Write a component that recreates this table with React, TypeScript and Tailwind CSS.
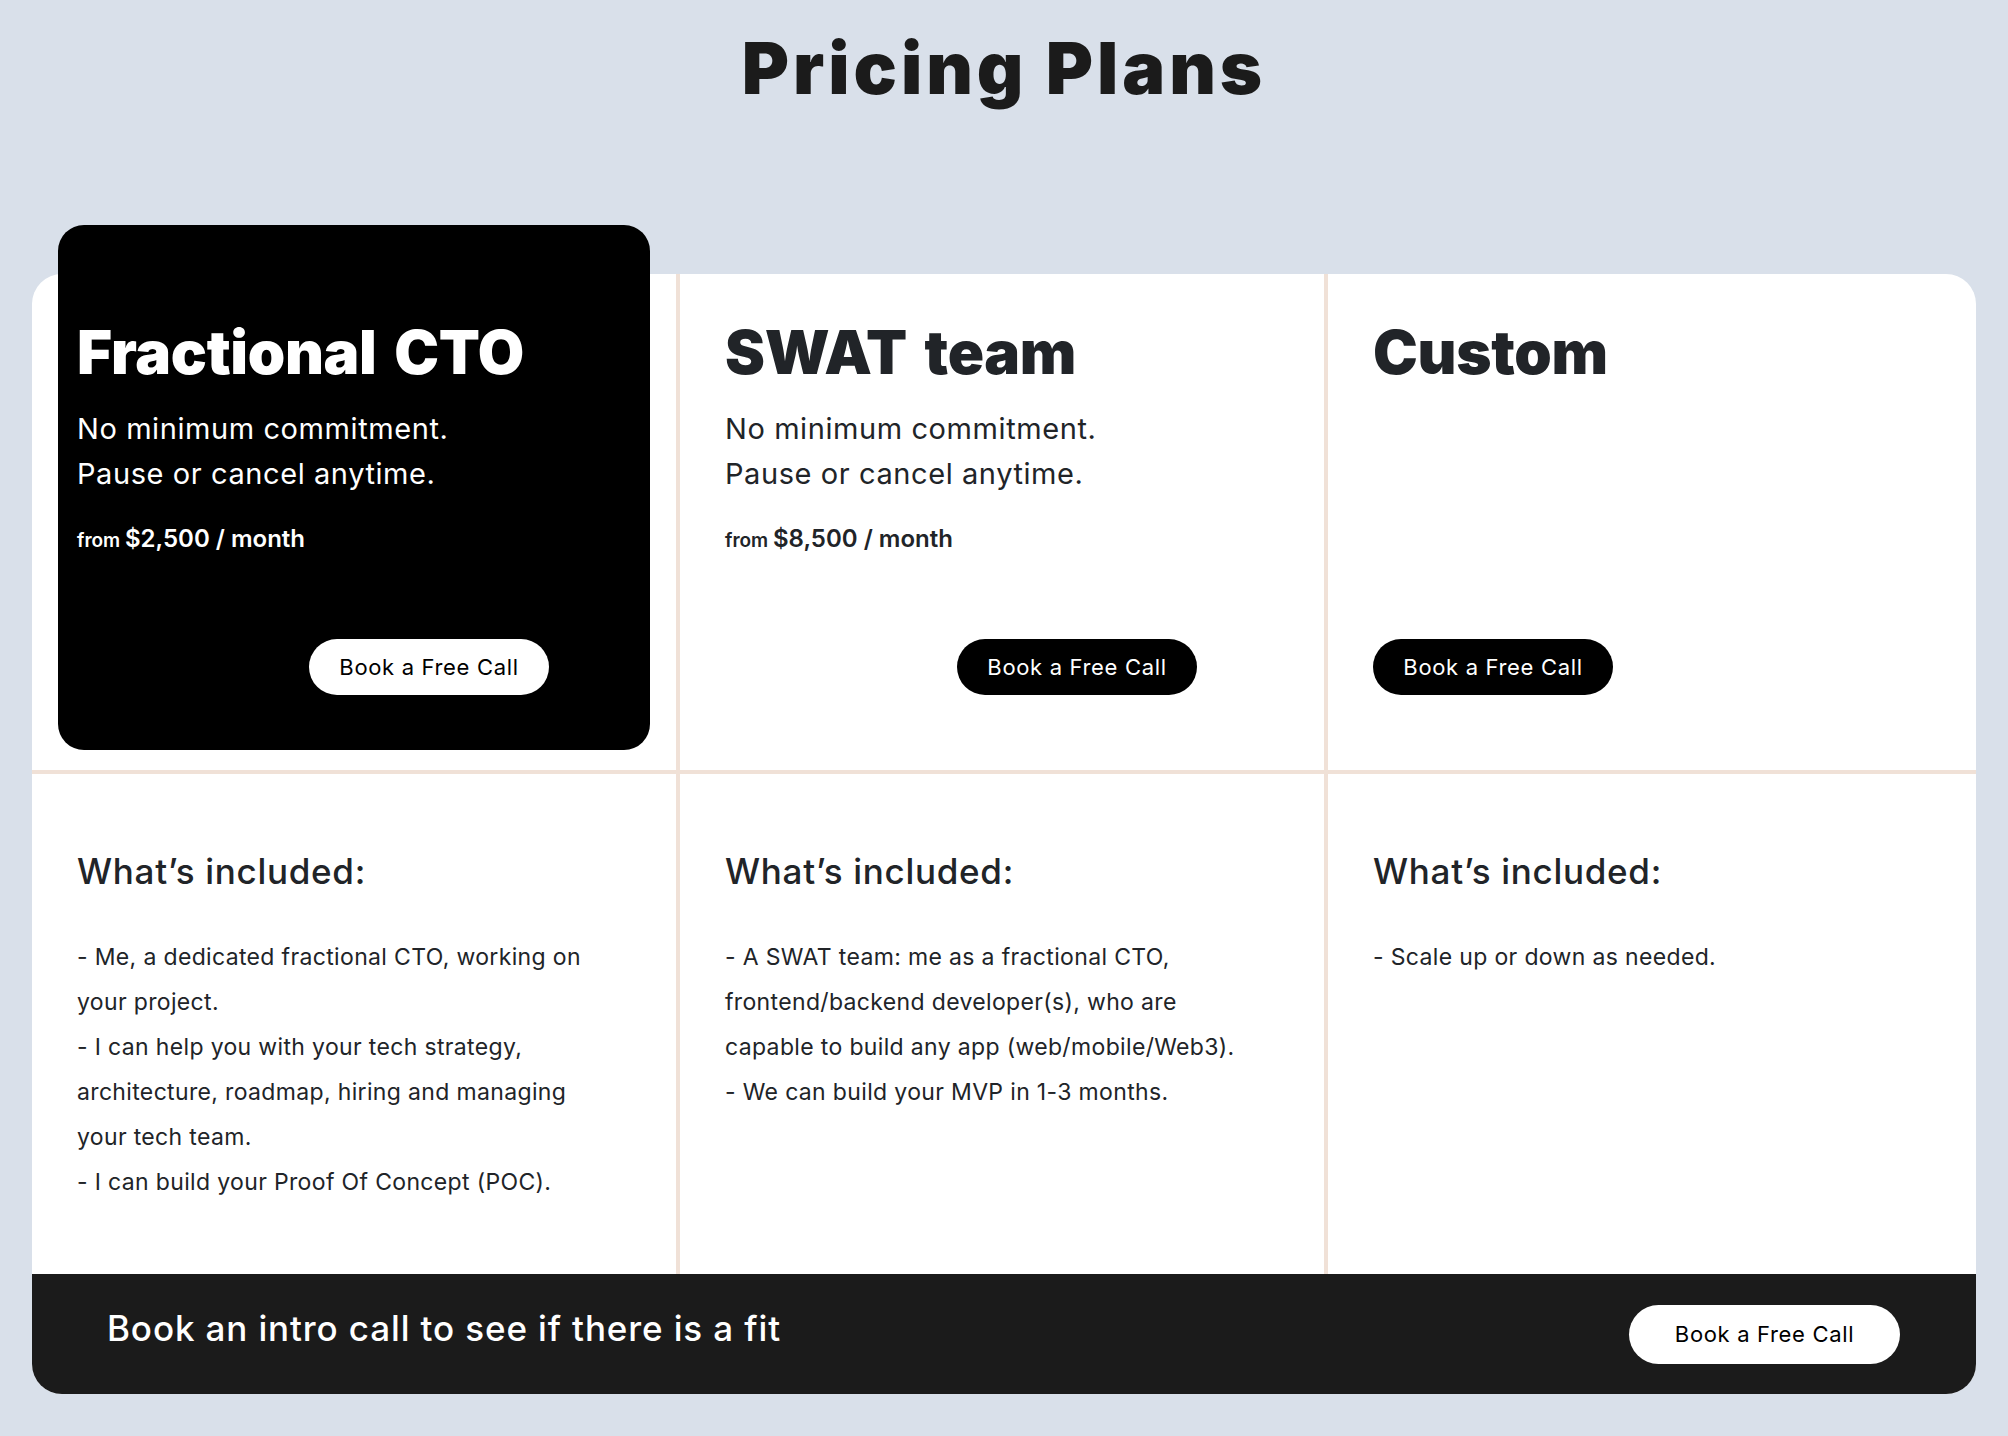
import React from 'react';

type Plan = {
  name: string;
  lines: string[];
  from?: string;
  included: string[];
  featured?: boolean;
  buttonOffset?: boolean;
};

const plans: Plan[] = [
  {
    name: 'Fractional CTO',
    lines: ['No minimum commitment.', 'Pause or cancel anytime.'],
    from: '$2,500 / month',
    featured: true,
    buttonOffset: true,
    included: [
      '- Me, a dedicated fractional CTO, working on',
      'your project.',
      '- I can help you with your tech strategy,',
      'architecture, roadmap, hiring and managing',
      'your tech team.',
      '- I can build your Proof Of Concept (POC).',
    ],
  },
  {
    name: 'SWAT team',
    lines: ['No minimum commitment.', 'Pause or cancel anytime.'],
    from: '$8,500 / month',
    buttonOffset: true,
    included: [
      '- A SWAT team: me as a fractional CTO,',
      'frontend/backend developer(s), who are',
      'capable to build any app (web/mobile/Web3).',
      '- We can build your MVP in 1-3 months.',
    ],
  },
  {
    name: 'Custom',
    lines: [],
    included: ['- Scale up or down as needed.'],
  },
];

const BookButton = ({ dark, className = '' }: { dark?: boolean; className?: string }) => (
  <button
    className={`h-[56px] w-[240px] rounded-full text-[22px] leading-none tracking-[0.03em] whitespace-nowrap ${
      dark ? 'bg-black text-white' : 'bg-white text-black'
    } ${className}`}
  >
    Book a Free Call
  </button>
);

const PlanHead = ({ plan }: { plan: Plan }) => {
  const light = plan.featured;
  return (
    <>
      <h2
        className={`text-[60px] leading-none font-black tracking-[-0.005em] [word-spacing:0.1em] whitespace-nowrap ${
          light ? 'text-white' : 'text-[#212428]'
        }`}
      >
        {plan.name}
      </h2>
      {plan.lines.length > 0 && (
        <div
          className={`mt-[24px] text-[29px] leading-[45px] tracking-[0.02em] ${
            light ? 'text-white' : 'text-[#212428]'
          }`}
        >
          {plan.lines.map((l) => (
            <div key={l}>{l}</div>
          ))}
        </div>
      )}
      {plan.from && (
        <p className={`mt-[28px] leading-[30px] font-semibold ${light ? 'text-white' : 'text-[#212428]'}`}>
          <span className="text-[19px]">from </span>
          <span className="text-[24px]">{plan.from}</span>
        </p>
      )}
      <BookButton dark={!light} className={`mt-auto ${plan.buttonOffset ? 'ml-[232px]' : ''}`} />
    </>
  );
};

export default function App() {
  return (
    <div className="min-h-screen bg-[#d9e0ea] pt-[32px] pb-[43px] font-['Inter','Liberation_Sans',sans-serif] text-[#212428]">
      <h1 className="text-center text-[72px] leading-none font-black tracking-[0.055em] text-[#1b1b1b]">
        Pricing Plans
      </h1>

      <div className="mx-[32px] mt-[170px] rounded-[30px] bg-white">
        <div className="grid grid-cols-3">
          {plans.map((plan, i) =>
            plan.featured ? (
              <div key={plan.name} className="h-[500px] border-r-4 border-b-4 border-[#f0e1d7] pb-[20px]">
                <div className="-mt-[49px] ml-[26px] mr-[26px] flex h-[525px] flex-col rounded-[26px] bg-black pt-[97px] pb-[55px] pl-[19px]">
                  <PlanHead plan={plan} />
                </div>
              </div>
            ) : (
              <div
                key={plan.name}
                className={`flex h-[500px] flex-col border-b-4 border-[#f0e1d7] pt-[48px] pb-[75px] pl-[45px] ${
                  i < 2 ? 'border-r-4' : ''
                }`}
              >
                <PlanHead plan={plan} />
              </div>
            )
          )}

          {plans.map((plan, i) => (
            <div
              key={plan.name + '-inc'}
              className={`h-[500px] pt-[77px] pl-[45px] ${i < 2 ? 'border-r-4 border-[#f0e1d7]' : ''}`}
            >
              <h3 className="text-[35px] leading-[40px] font-medium tracking-[0.02em]">What’s included:</h3>
              <div className="mt-[44px] text-[23px] leading-[45px] tracking-[0.015em]">
                {plan.included.map((l) => (
                  <div key={l} className="whitespace-nowrap">
                    {l}
                  </div>
                ))}
              </div>
            </div>
          ))}
        </div>

        <div className="flex h-[120px] items-center justify-between rounded-b-[30px] bg-[#1b1b1b] pr-[76px] pl-[75px]">
          <p className="mb-[12px] text-[35px] font-medium tracking-[0.025em] text-white">
            Book an intro call to see if there is a fit
          </p>
          <button className="h-[59px] w-[271px] rounded-full bg-white text-[22px] tracking-[0.03em] text-black">
            Book a Free Call
          </button>
        </div>
      </div>
    </div>
  );
}
